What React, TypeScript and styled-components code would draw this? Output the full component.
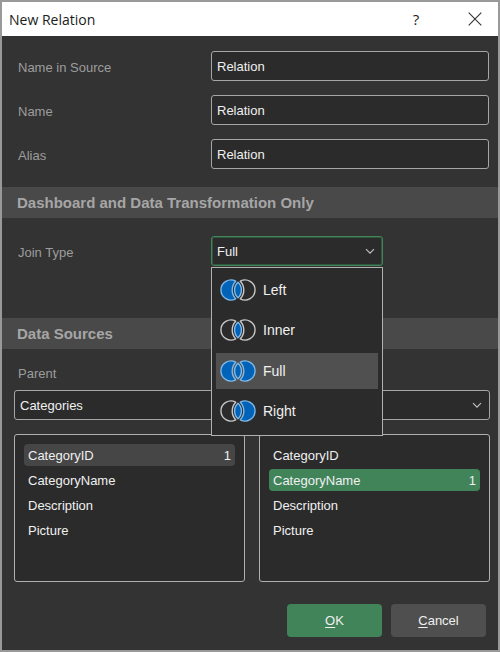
import React, { useState } from "react";
import styled, { createGlobalStyle, css } from "styled-components";

type Join = "Left" | "Inner" | "Full" | "Right";

const joins: Join[] = ["Left", "Inner", "Full", "Right"];
const columns = ["CategoryID", "CategoryName", "Description", "Picture"];

const GlobalStyle = createGlobalStyle`
  *, *::before, *::after { box-sizing: border-box; }
  body {
    margin: 0;
    background: #333333;
    font-family: "Liberation Sans", Arial, sans-serif;
    font-size: 14px;
    color: #f0f0f0;
  }
  button, input, select { font: inherit; color: inherit; margin: 0; }
`;

const Dialog = styled.form`
  display: flex;
  flex-direction: column;
  min-height: 100vh;
  border: 2px solid #999999;
  background: #333333;
`;

const TitleBar = styled.header`
  display: flex;
  align-items: center;
  height: 34px;
  padding: 0 7px;
  background: #ffffff;
  color: #1c1c1c;
`;

const Title = styled.h1`
  flex: 1;
  margin: 0;
  font: 400 14px "Open Sans", "Noto Sans", sans-serif;
`;

const TitleButton = styled.button`
  display: flex;
  align-items: center;
  justify-content: center;
  width: 32px;
  height: 32px;
  margin-left: 27px;
  padding: 0;
  border: 0;
  background: none;
  font: 400 15px "Open Sans", "Noto Sans", sans-serif;
`;

const Fields = styled.div`
  display: grid;
  gap: 14px;
  padding: 15px 9px 18px 16px;
`;

const Label = styled.label`
  font-size: 13px;
  line-height: 20px;
  color: #9d9d9d;
`;

const FieldRow = styled.div`
  display: grid;
  grid-template-columns: 193px 1fr;
  align-items: center;

  > ${Label} {
    padding-top: 3px;
  }
`;

const boxStyle = css`
  width: 100%;
  height: 30px;
  padding: 0 5px;
  border: 1px solid #a6a6a6;
  border-radius: 3px;
  outline: none;
  background: #2b2b2b;
  font-size: 13px;
`;

const TextBox = styled.input`
  ${boxStyle}
`;

const SectionTitle = styled.h2`
  height: 31px;
  margin: 0;
  padding: 0 15px;
  background: #494949;
  color: #a6a6a6;
  font-size: 15px;
  font-weight: 700;
  line-height: 31px;
`;

const JoinArea = styled.div`
  padding: 18px 9px 52px 16px;
`;

const SelectShell = styled.div<{ $width?: string }>`
  position: relative;
  width: ${(p) => p.$width ?? "100%"};
`;

const Select = styled.select<{ $active?: boolean }>`
  ${boxStyle}
  display: block;
  appearance: none;
  ${(p) => p.$active && "border-color: #41845a; box-shadow: inset 0 0 0 1px #31573f;"}
`;

const Chevron = styled.svg`
  position: absolute;
  top: 12px;
  right: 8px;
  pointer-events: none;
`;

const Menu = styled.div`
  position: absolute;
  z-index: 2;
  top: 31px;
  left: 0;
  display: flex;
  flex-direction: column;
  justify-content: space-between;
  width: 100%;
  height: 169px;
  padding: 4px 4px 6px;
  border: 1px solid #b0b0b0;
  background: #2b2b2b;
`;

const MenuItem = styled.button<{ $active: boolean }>`
  display: flex;
  align-items: center;
  gap: 7px;
  height: 36px;
  padding: 0 4px;
  border: 0;
  background: ${(p) => (p.$active ? "#505050" : "transparent")};
  font-size: 14px;
  text-align: left;
`;

const Sources = styled.div`
  display: grid;
  grid-template-columns: 1fr 1fr;
  gap: 14px;
  padding: 15px 8px 0 12px;
`;

const Source = styled.div`
  display: flex;
  flex-direction: column;
  justify-content: flex-end;

  > ${Label} {
    margin: 0 0 6px 4px;
  }
`;

const ColumnList = styled.div`
  display: flex;
  flex-direction: column;
  gap: 3px;
  min-height: 148px;
  margin-top: 14px;
  padding: 9px;
  border: 1px solid #b0b0b0;
  border-radius: 3px;
  background: #2b2b2b;
`;

const Column = styled.button<{ $fill: string }>`
  display: flex;
  align-items: center;
  justify-content: space-between;
  height: 22px;
  padding: 0 4px;
  border: 0;
  border-radius: 4px;
  background: ${(p) => p.$fill};
  font-size: 13px;
`;

const Footer = styled.footer`
  display: flex;
  justify-content: flex-end;
  gap: 9px;
  padding: 22px 12px 13px;
`;

const Action = styled.button<{ $primary?: boolean }>`
  width: 95px;
  height: 33px;
  padding: 0;
  border: 0;
  border-radius: 4px;
  background: ${(p) => (p.$primary ? "#41845a" : "#4f4f4f")};
  font-size: 13px;

  u {
    text-underline-offset: 2px;
  }
`;

function Arrow() {
  return (
    <Chevron width="10" height="7" viewBox="0 0 10 7" fill="none" aria-hidden="true">
      <path d="M1 1.2 5 5.2 9 1.2" stroke="#c4c4c4" strokeWidth="1.1" />
    </Chevron>
  );
}

function JoinIcon({ kind }: { kind: Join }) {
  const left = kind === "Left" || kind === "Full";
  const right = kind === "Right" || kind === "Full";
  const on = "#7fb9ea";
  const off = "#c8c8c8";
  const blue = "#0063b8";
  return (
    <svg
      width="36"
      height="22"
      viewBox="0 0 36 22"
      strokeWidth="1.4"
      strokeLinejoin="round"
      aria-hidden="true"
    >
      <path
        d="M15.7 2.2A10 10 0 1 0 15.7 19.8A12.8 12.8 0 0 1 15.7 2.2Z"
        fill={left ? blue : "none"}
        stroke={left ? on : off}
      />
      <path
        d="M20.3 2.2A10 10 0 1 1 20.3 19.8A12.8 12.8 0 0 0 20.3 2.2Z"
        fill={right ? blue : "none"}
        stroke={right ? on : off}
      />
      <path
        d="M18 3.3A10.4 10.4 0 0 1 18 18.7A10.4 10.4 0 0 1 18 3.3Z"
        fill={blue}
        stroke={on}
      />
    </svg>
  );
}

function Field({ id, label }: { id: string; label: string }) {
  return (
    <FieldRow>
      <Label htmlFor={id}>{label}</Label>
      <TextBox id={id} defaultValue="Relation" />
    </FieldRow>
  );
}

interface SourceProps {
  id: string;
  name: string;
  label?: string;
  initial: string;
  fill: string;
}

function SourcePanel({ id, name, label, initial, fill }: SourceProps) {
  const [selected, setSelected] = useState(initial);
  return (
    <Source>
      {label && <Label htmlFor={id}>{label}</Label>}
      <SelectShell>
        <Select id={id} aria-label={name}>
          <option>Categories</option>
        </Select>
        <Arrow />
      </SelectShell>
      <ColumnList role="listbox" aria-label={`${name} columns`}>
        {columns.map((column) => (
          <Column
            key={column}
            type="button"
            role="option"
            aria-selected={column === selected}
            $fill={column === selected ? fill : "transparent"}
            onClick={() => setSelected(column)}
          >
            <span>{column}</span>
            {column === selected && <span>1</span>}
          </Column>
        ))}
      </ColumnList>
    </Source>
  );
}

export default function App() {
  const [join, setJoin] = useState<Join>("Full");
  return (
    <Dialog onSubmit={(e) => e.preventDefault()}>
      <GlobalStyle />
      <TitleBar>
        <Title>New Relation</Title>
        <TitleButton type="button" aria-label="Help">?</TitleButton>
        <TitleButton type="button" aria-label="Close">
          <svg width="14" height="14" viewBox="0 0 14 14" aria-hidden="true">
            <path d="M.7.7 13.3 13.3M13.3.7.7 13.3" stroke="#333333" strokeWidth="1.1" />
          </svg>
        </TitleButton>
      </TitleBar>

      <Fields>
        <Field id="source-name" label="Name in Source" />
        <Field id="name" label="Name" />
        <Field id="alias" label="Alias" />
      </Fields>

      <SectionTitle>Dashboard and Data Transformation Only</SectionTitle>
      <JoinArea>
        <FieldRow>
          <Label htmlFor="join">Join Type</Label>
          <SelectShell $width="172px">
            <Select
              id="join"
              $active
              value={join}
              onChange={(e) => setJoin(e.target.value as Join)}
            >
              {joins.map((j) => (
                <option key={j}>{j}</option>
              ))}
            </Select>
            <Arrow />
            <Menu role="listbox" aria-label="Join Type">
              {joins.map((j) => (
                <MenuItem
                  key={j}
                  type="button"
                  role="option"
                  aria-selected={j === join}
                  $active={j === join}
                  onClick={() => setJoin(j)}
                >
                  <JoinIcon kind={j} />
                  {j}
                </MenuItem>
              ))}
            </Menu>
          </SelectShell>
        </FieldRow>
      </JoinArea>

      <SectionTitle>Data Sources</SectionTitle>
      <Sources>
        <SourcePanel
          id="parent"
          name="Parent"
          label="Parent"
          initial="CategoryID"
          fill="#464646"
        />
        <SourcePanel id="child" name="Child" initial="CategoryName" fill="#41845a" />
      </Sources>

      <Footer>
        <Action type="submit" $primary>
          <u>O</u>K
        </Action>
        <Action type="button">
          <u>C</u>ancel
        </Action>
      </Footer>
    </Dialog>
  );
}
